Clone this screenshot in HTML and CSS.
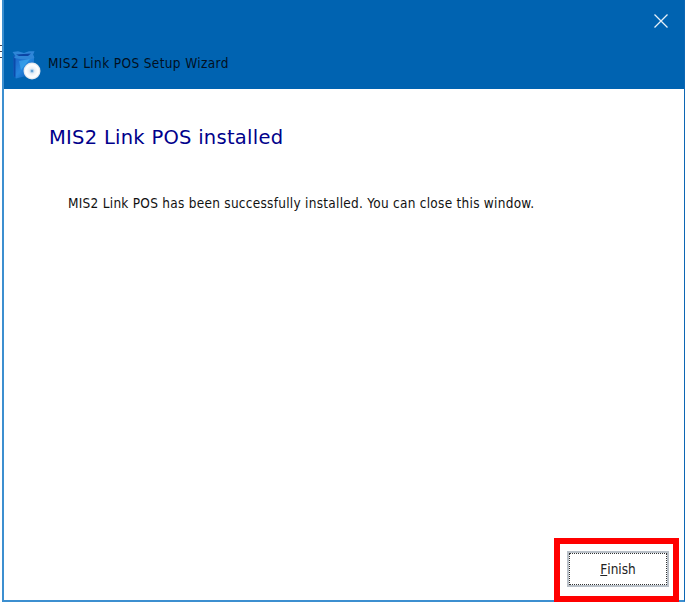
FILE: index.html
```html
<!DOCTYPE html>
<html lang="en">
<head>
<meta charset="utf-8">
<title>MIS2 Link POS Setup Wizard</title>
<link rel="stylesheet" href="styles.css">
</head>
<body>
<div class="behind"><i></i><i></i><i></i></div>
<main class="window">
  <header class="titlebar">
    <div class="caption">
      <svg class="app-icon" width="30" height="30" viewBox="0 0 30 30">
        <defs>
          <linearGradient id="box" x1="0" y1="0" x2="1" y2="1">
            <stop offset="0" stop-color="#1a5fc4"/><stop offset=".5" stop-color="#2384dc"/><stop offset="1" stop-color="#0c50b0"/>
          </linearGradient>
          <radialGradient id="disc">
            <stop offset="0" stop-color="#8ebee6"/><stop offset=".2" stop-color="#b4d4ee"/><stop offset=".32" stop-color="#e9eef5"/><stop offset=".75" stop-color="#fff"/><stop offset="1" stop-color="#d5dce6"/>
          </radialGradient>
        </defs>
        <path d="M2.500 5.500H23V24L5 28.500 2.500 26z" fill="url(#box)"/>
        <path d="M2.500 6 4.500 8v20L2.500 26z" fill="#0b4baa"/>
        <path d="M1.500 2 7 1.200l6 1.800 5-1.800h5.500L22 5l1.500 3-6 1.500L9 9 3 8l1.500-2z" fill="#2f86d8"/>
        <path d="M5 4.500 20 3.500 17 6H8z" fill="#0b45a5"/>
        <path d="M8 11 19 9l-9 11z" fill="#48b8f5" opacity=".5"/>
        <circle cx="21" cy="21" r="8.500" fill="url(#disc)"/>
        <circle cx="21" cy="21" r="1" fill="#4f93cc"/>
      </svg>
      <span class="caption-text">MIS2 Link POS Setup Wizard</span>
    </div>
    <svg class="close" width="14" height="14" viewBox="0 0 14 14"><path d="M.5.5l13 13M13.500.5l-13 13"/></svg>
  </header>
  <section class="content">
    <h1>MIS2 Link POS installed</h1>
    <p>MIS2 Link POS has been successfully installed. You can close this window.</p>
  </section>
  <footer class="actions">
    <div class="highlight">
      <button class="finish"><span><u>F</u>inish</span></button>
    </div>
  </footer>
</main>
</body>
</html>
```

FILE: styles.css
```css
* { box-sizing: border-box; }
body {
  margin: 0;
  display: flex;
  width: 685px;
  height: 604px;
  overflow: hidden;
  background: #fff;
  font-family: "DejaVu Sans Condensed", "DejaVu Sans", sans-serif;
  font-stretch: condensed;
  font-size: 13.5px;
  color: #111;
}
.behind { width: 2px; padding-top: 45px; flex: none; }
.behind i { display: block; height: 1px; margin-bottom: 5px; background: #445; }
.window {
  flex: none;
  width: 683px;
  height: 602px;
  display: flex;
  flex-direction: column;
  border: solid #3c8fd0;
  border-width: 0 1px 2px 2px;
  border-right-color: #0c66b4;
}
.titlebar {
  height: 89px;
  flex: none;
  background: #0063b1;
  display: flex;
  justify-content: space-between;
  padding: 14px 16px 0 7px;
}
.caption { display: flex; align-items: flex-start; padding-top: 36px; }
.app-icon { flex: none; }
.caption-text {
  margin: 5px 0 0 7px;
  line-height: 16px;
  letter-spacing: .37px;
  color: #02101f;
  white-space: nowrap;
}
.close { fill: none; stroke: #e6f0f8; stroke-width: 1.3; }
.content { flex: 1; padding: 36px 0 0 45px; white-space: nowrap; }
h1 {
  margin: 0;
  font: 400 19.5px/26px "DejaVu Sans", sans-serif;
  letter-spacing: .27px;
  color: #00008b;
}
p { margin: 43px 0 0 19px; line-height: 18px; letter-spacing: .27px; }
.actions { display: flex; justify-content: flex-end; padding-right: 5px; height: 62px; }
.highlight {
  width: 125px;
  height: 64px;
  flex: none;
  border: 6px solid #f00;
  padding: 7px 4px 7px 7px;
  background: #fff;
}
.finish {
  display: block;
  width: 102px;
  height: 36px;
  margin: 0;
  padding: 0;
  border: 2px solid #b9c0c8;
  background: #fff;
  font: inherit;
  color: #222;
}
.finish span {
  display: flex;
  align-items: center;
  justify-content: center;
  height: 32px;
  border: 1px dotted #333;
}
```
